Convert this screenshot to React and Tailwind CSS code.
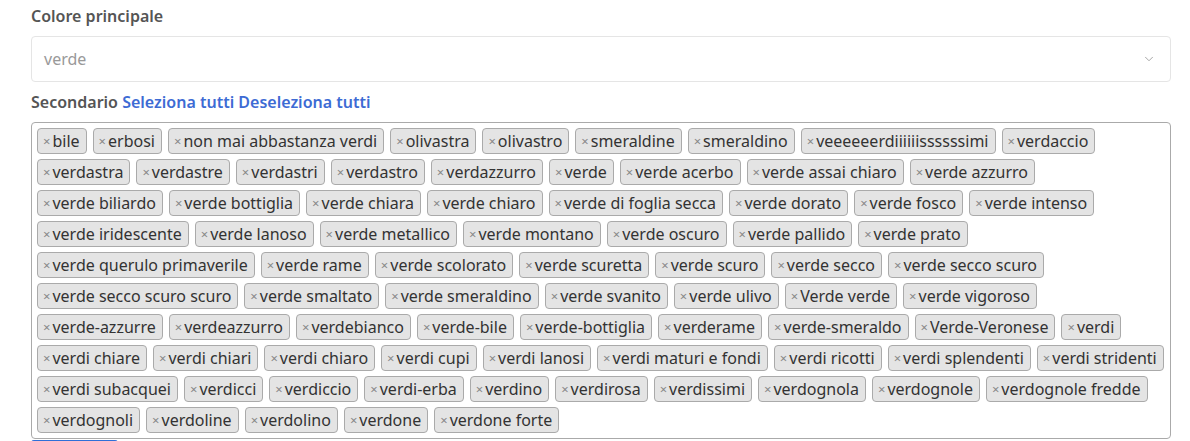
import { ChevronDown } from 'lucide-react'

const secondary = [
  'bile', 'erbosi', 'non mai abbastanza verdi', 'olivastra', 'olivastro', 'smeraldine', 'smeraldino',
  'veeeeeerdiiiiiissssssimi', 'verdaccio', 'verdastra', 'verdastre', 'verdastri', 'verdastro',
  'verdazzurro', 'verde', 'verde acerbo', 'verde assai chiaro', 'verde azzurro', 'verde biliardo',
  'verde bottiglia', 'verde chiara', 'verde chiaro', 'verde di foglia secca', 'verde dorato',
  'verde fosco', 'verde intenso', 'verde iridescente', 'verde lanoso', 'verde metallico',
  'verde montano', 'verde oscuro', 'verde pallido', 'verde prato', 'verde querulo primaverile',
  'verde rame', 'verde scolorato', 'verde scuretta', 'verde scuro', 'verde secco', 'verde secco scuro',
  'verde secco scuro scuro', 'verde smaltato', 'verde smeraldino', 'verde svanito', 'verde ulivo',
  'Verde verde', 'verde vigoroso', 'verde-azzurre', 'verdeazzurro', 'verdebianco', 'verde-bile',
  'verde-bottiglia', 'verderame', 'verde-smeraldo', 'Verde-Veronese', 'verdi', 'verdi chiare',
  'verdi chiari', 'verdi chiaro', 'verdi cupi', 'verdi lanosi', 'verdi maturi e fondi', 'verdi ricotti',
  'verdi splendenti', 'verdi stridenti', 'verdi subacquei', 'verdicci', 'verdiccio', 'verdi-erba',
  'verdino', 'verdirosa', 'verdissimi', 'verdognola', 'verdognole', 'verdognole fredde', 'verdognoli',
  'verdoline', 'verdolino', 'verdone', 'verdone forte',
]

export default function App() {
  return (
    <main className="w-[1190px] h-[441px] overflow-hidden bg-white pl-[31px] pr-[19px] pt-[5px] font-['Noto_Sans',sans-serif] text-[#333]">
      {/* Colore principale */}
      <label className="block text-[16px] leading-[22px] font-semibold text-[#555]">Colore principale</label>
      <div className="mt-[9px] h-[46px] flex items-center justify-between border border-[#e5e5e5] rounded-[4px] pl-[12px] pr-[14px]">
        <span className="text-[16px] text-[#999]">verde</span>
        <ChevronDown className="w-[14px] h-[14px] text-[#999]" strokeWidth={1.5} />
      </div>

      {/* Secondario */}
      <div className="mt-[9px] text-[16px] leading-[22px] font-semibold">
        <span className="text-[#555]">Secondario</span>{' '}
        <a className="text-[#3d6bd4] cursor-pointer">Seleziona tutti</a>{' '}
        <a className="text-[#3d6bd4] cursor-pointer">Deseleziona tutti</a>
      </div>
      <div className="mt-[9px] border border-[#aaa] rounded-[4px] px-[5px] pt-[5px] pb-[5px] flex flex-wrap gap-x-[6px] gap-y-[5px]">
        {secondary.map((item) => (
          <span
            key={item}
            className="flex items-center h-[26px] border border-[#aaa] rounded-[4px] bg-[#e4e4e4] pl-[5px] pr-[6px] text-[16px] leading-[24px] text-[#333]"
          >
            <span className="text-[13px] text-[#888] mr-[2px]">×</span>
            {item}
          </span>
        ))}
      </div>
      <div className="mt-[1px] w-[87px] h-[4px] bg-[#2f6fd8] rounded-t-[3px]" />
    </main>
  )
}
